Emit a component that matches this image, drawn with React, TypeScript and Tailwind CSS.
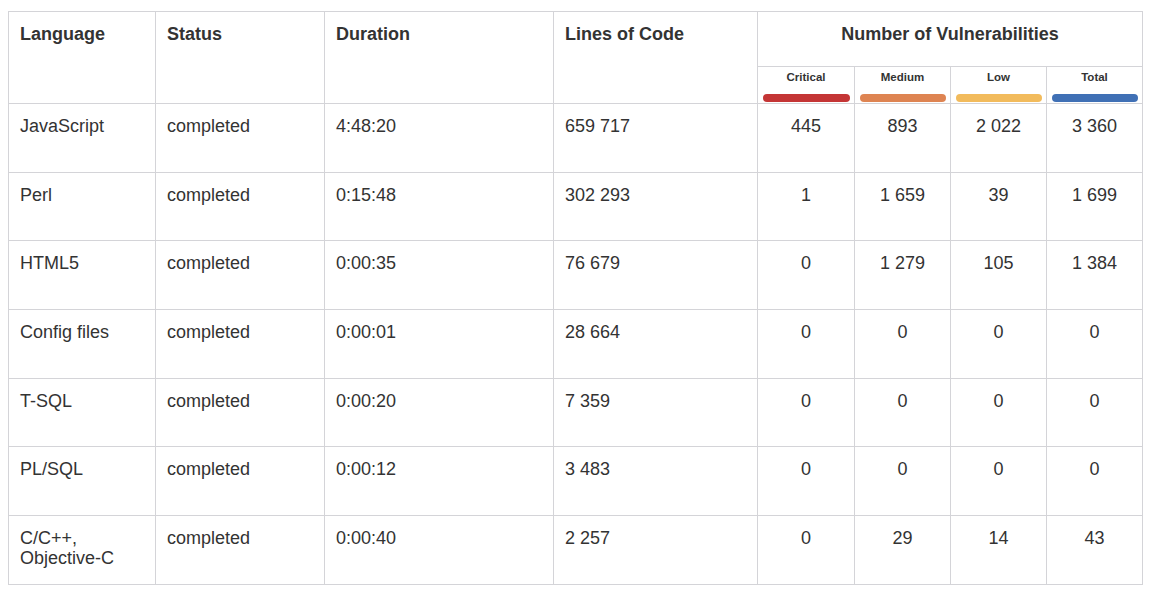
import React from "react";

const rows = [
  ["JavaScript", "completed", "4:48:20", "659 717", "445", "893", "2 022", "3 360"],
  ["Perl", "completed", "0:15:48", "302 293", "1", "1 659", "39", "1 699"],
  ["HTML5", "completed", "0:00:35", "76 679", "0", "1 279", "105", "1 384"],
  ["Config files", "completed", "0:00:01", "28 664", "0", "0", "0", "0"],
  ["T-SQL", "completed", "0:00:20", "7 359", "0", "0", "0", "0"],
  ["PL/SQL", "completed", "0:00:12", "3 483", "0", "0", "0", "0"],
  ["C/C++,\nObjective-C", "completed", "0:00:40", "2 257", "0", "29", "14", "43"],
];

const subs = [
  { label: "Critical", color: "bg-[#c43535]" },
  { label: "Medium", color: "bg-[#de8452]" },
  { label: "Low", color: "bg-[#f2bb5c]" },
  { label: "Total", color: "bg-[#4070b5]" },
];

export default function App() {
  return (
    <div
      className="bg-white w-[1154px] h-[596px] pl-2 pt-[11px] text-[#333]"
      style={{ fontFamily: '"Liberation Sans", Arial, sans-serif' }}
    >
      <table className="border-collapse table-fixed w-[1134px] text-[18px] leading-[20px]">
        <colgroup>
          <col className="w-[147px]" />
          <col className="w-[169px]" />
          <col className="w-[229px]" />
          <col className="w-[204px]" />
          <col className="w-[97px]" />
          <col className="w-[96px]" />
          <col className="w-[96px]" />
          <col className="w-[96px]" />
        </colgroup>
        <thead>
          <tr className="h-[55px]">
            {["Language", "Status", "Duration", "Lines of Code"].map((h) => (
              <th
                key={h}
                rowSpan={2}
                className="border border-[#d4d4d8] align-top text-left font-bold pt-[12px] pl-[11px] pr-3"
              >
                {h}
              </th>
            ))}
            <th
              colSpan={4}
              className="border border-[#d4d4d8] align-top text-center font-bold pt-[12px]"
            >
              Number of Vulnerabilities
            </th>
          </tr>
          <tr className="h-[36px]">
            {subs.map((s) => (
              <th
                key={s.label}
                className="border border-[#d4d4d8] align-top text-center font-bold px-0 pt-[3px] pb-[1px]"
              >
                <div className="text-[11.5px] leading-[14px]">{s.label}</div>
                <div className={`mt-[10px] ml-[5px] mr-[4px] h-[8px] rounded-full ${s.color}`} />
              </th>
            ))}
          </tr>
        </thead>
        <tbody>
          {rows.map((r, i) => (
            <tr key={i} className="h-[68.7px]">
              {r.map((c, j) => (
                <td
                  key={j}
                  className={`border border-[#d4d4d8] align-top pt-3 whitespace-pre-line ${
                    j >= 4 ? "text-center px-0" : "text-left pl-[11px] pr-3"
                  }`}
                >
                  {c}
                </td>
              ))}
            </tr>
          ))}
        </tbody>
      </table>
    </div>
  );
}
